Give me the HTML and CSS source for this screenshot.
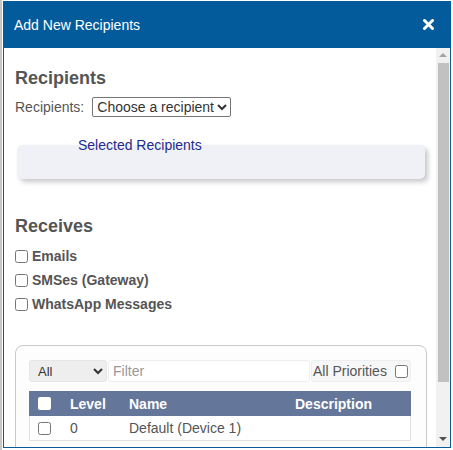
FILE: index.html
```html
<!DOCTYPE html>
<html>
<head>
<meta charset="utf-8">
<link rel="stylesheet" href="styles.css">
</head>
<body>
<div class="page">
  <div class="dialog">
    <div class="dlg-head">
      <span class="dlg-title">Add New Recipients</span>
      <svg class="close" width="11" height="11" viewBox="0 0 11 11"><path d="M1.5 1.5L9.5 9.5M9.5 1.5L1.5 9.5" stroke="#fff" stroke-width="3" stroke-linecap="round"/></svg>
    </div>
    <div class="dlg-body">
      <div class="content">
        <h3 class="h-recip">Recipients</h3>
        <div class="recip-row">
          <span class="lbl">Recipients:</span>
          <select class="recip-select"><option>Choose a recipient</option></select>
        </div>
        <div class="selected-box">
          <span class="legend">Selected Recipients</span>
        </div>
        <h3 class="h-receives">Receives</h3>
        <label class="chk-row"><input type="checkbox"><span>Emails</span></label>
        <label class="chk-row"><input type="checkbox"><span>SMSes (Gateway)</span></label>
        <label class="chk-row"><input type="checkbox"><span>WhatsApp Messages</span></label>
        <div class="list-box">
          <div class="filter-row">
            <select class="f-sel"><option>All</option></select>
            <input class="f-input" type="text" placeholder="Filter">
            <label class="f-prio"><span>All Priorities</span><input type="checkbox"></label>
          </div>
          <div class="tbl">
            <div class="tr th">
              <span class="cb-white"></span>
              <span>Level</span>
              <span>Name</span>
              <span>Description</span>
            </div>
            <div class="tr td">
              <span class="cb-cell"><input type="checkbox"></span>
              <span>0</span>
              <span>Default (Device 1)</span>
              <span></span>
            </div>
          </div>
        </div>
      </div>
      <div class="sbar">
        <div class="arrow up"></div>
        <div class="track"><div class="thumb"></div></div>
        <div class="arrow down"></div>
      </div>
    </div>
  </div>
</div>
</body>
</html>
```

FILE: styles.css
```css
html, body {
  margin: 0;
  padding: 0;
  background: #fff;
  height: 100%;
}
body {
  font-family: "Liberation Sans", Arial, sans-serif;
  font-size: 14px;
  color: #555;
  overflow: hidden;
}
.page {
  border-left: 2px solid #c6c6c6;
  padding: 1px 2px 0 1px;
  height: 450px;
  box-sizing: border-box;
}
.dialog {
  height: 447px;
  border: 1px solid #0b5a98;
  border-top: none;
  box-sizing: border-box;
  display: flex;
  flex-direction: column;
  background: #fff;
}
.dlg-head {
  height: 47px;
  flex: none;
  background: #035b9b;
  display: flex;
  align-items: center;
  justify-content: space-between;
  padding: 0 17px 0 11px;
  margin: 0 -1px;
}
.dlg-title {
  color: #fff;
  font-size: 14px;
}
.close {
  display: block;
}
.dlg-body {
  flex: 1;
  display: flex;
  min-height: 0;
  overflow: hidden;
}
.content {
  flex: 1;
  padding: 0 0 0 11px;
  overflow: hidden;
}
h3 {
  margin: 0;
  font-size: 18px;
  line-height: 22px;
  font-weight: bold;
  color: #555;
}
.h-recip {
  margin-top: 19px;
}
.recip-row {
  margin-top: 8px;
  display: flex;
  align-items: center;
  height: 20px;
}
.lbl {
  font-size: 14px;
  margin-right: 8px;
}
.recip-select {
  font-family: "Liberation Sans", Arial, sans-serif;
  font-size: 14px;
  color: #333;
  height: 20px;
  padding: 0;
  border: 1px solid #767676;
  border-radius: 2px;
  background: #fff;
  margin: 0;
}
.selected-box {
  display: flow-root;
  margin: 28px 11px 0 2px;
  height: 34px;
  background: #f0f1f6;
  border-radius: 5px;
  box-shadow: 3px 3px 5px rgba(0,0,0,0.22);
}
.legend {
  display: block;
  margin: -9px 0 0 61px;
  line-height: 18px;
  color: #1f2a8e;
  font-size: 14px;
}
.h-receives {
  margin-top: 36px;
  margin-bottom: 7px;
}
.chk-row {
  display: flex;
  align-items: center;
  height: 24px;
  font-weight: bold;
  font-size: 14px;
}
.chk-row input {
  margin: 0 4px 0 0;
  width: 13px;
  height: 13px;
}
.list-box {
  margin: 29px 9px 0 0;
  border: 1px solid #c9c9c9;
  border-radius: 8px;
  padding: 14px 15px 20px 13px;
  background: #fdfdfd;
}
.filter-row {
  display: flex;
  gap: 1px;
  height: 22px;
}
.f-sel {
  width: 78px;
  height: 22px;
  margin: 0;
  border: 1px solid #e6e6e6;
  border-radius: 3px;
  background: #eee;
  font-family: "Liberation Sans", Arial, sans-serif;
  font-size: 13px;
  color: #333;
  padding: 0 0 0 4px;
}
.f-input {
  width: 202px;
  height: 22px;
  box-sizing: border-box;
  margin: 0;
  border: 1px solid #eee;
  border-radius: 3px;
  background: #fff;
  font-family: "Liberation Sans", Arial, sans-serif;
  font-size: 14px;
  padding: 0 4px;
  outline: none;
}
.f-input::placeholder {
  color: #999;
}
.f-prio {
  flex: 1;
  display: flex;
  align-items: center;
  height: 22px;
  box-sizing: border-box;
  border: 1px solid #eee;
  border-radius: 3px;
  background: #f7f7f7;
  padding-left: 1px;
  color: #555;
}
.f-prio input {
  margin: 0 0 0 8px;
  width: 13px;
  height: 13px;
}
.tbl {
  margin-top: 9px;
  border: 1px solid #e2e2e2;
  border-top: none;
}
.tr {
  display: grid;
  grid-template-columns: 32px 59px 166px 1fr;
  align-items: center;
  padding-left: 8px;
}
.th {
  height: 25px;
  margin: 0 -1px;
  padding-left: 9px;
  background: #64769a;
  color: #fff;
  font-weight: bold;
}
.cb-white {
  display: block;
  width: 13px;
  height: 13px;
  background: #fff;
  border-radius: 2px;
}
.td {
  height: 24px;
  background: #fff;
  color: #555;
}
.cb-cell {
  display: flex;
}
.cb-cell input {
  margin: 0;
  width: 13px;
  height: 13px;
}
.sbar {
  width: 14px;
  flex: none;
  background: #f1f1f1;
  display: flex;
  flex-direction: column;
}
.arrow {
  height: 15px;
  flex: none;
  position: relative;
}
.arrow::after {
  content: "";
  position: absolute;
  left: 3px;
  width: 0;
  height: 0;
  border-left: 4px solid transparent;
  border-right: 4px solid transparent;
}
.arrow.up::after {
  top: 5px;
  border-bottom: 4px solid #a3a3a3;
}
.arrow.down::after {
  top: 5px;
  border-top: 4px solid #505050;
}
.track {
  flex: 1;
  padding: 0 1px 0 2px;
}
.thumb {
  height: 319px;
  background: #c1c1c1;
}
```
